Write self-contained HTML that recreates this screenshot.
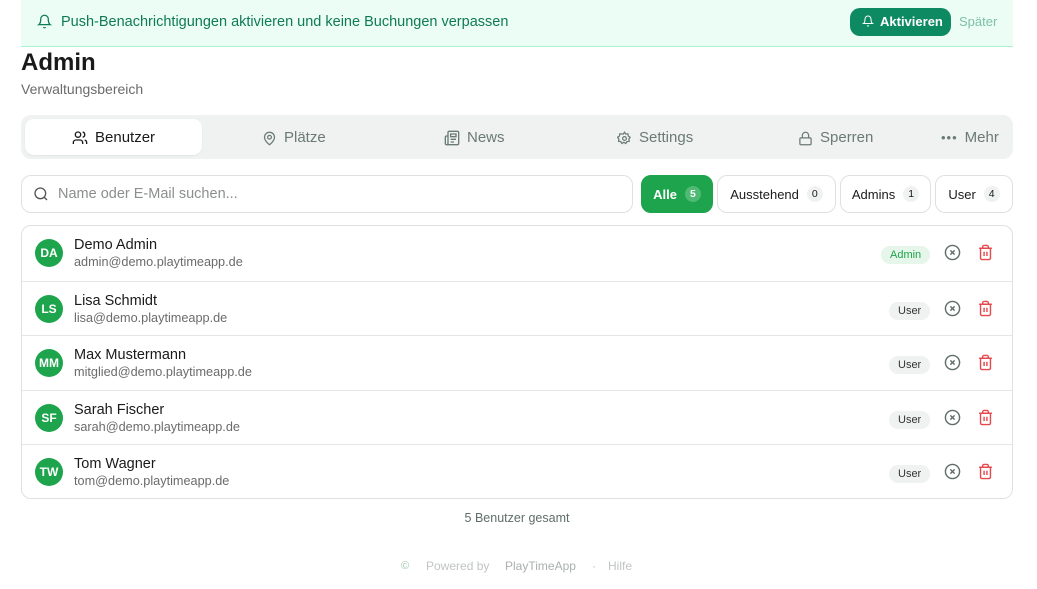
<!DOCTYPE html>
<html><head><meta charset="utf-8"><style>
*{box-sizing:border-box;margin:0;padding:0}
body{width:1037px;height:589px;background:#fff;font-family:"Liberation Sans",sans-serif;position:relative;overflow:hidden;color:#1a1a1a}
.abs{position:absolute}
.banner{left:21px;top:0;width:992px;height:47px;background:#ecfdf5;border-bottom:1px solid #a7f3d0}
.btxt{left:61px;top:14px;font-size:14.5px;color:#0f7a57}
.akt{left:850px;top:8px;width:101px;height:28px;background:#0e8a62;border-radius:10px;color:#fff;font-weight:bold;font-size:13px;line-height:28px;padding-left:30px}
.sp{left:959px;top:14px;font-size:13px;color:#7fbfa6}
h1{position:absolute;left:21px;top:49px;font-size:24px;font-weight:bold}
.sub{left:21px;top:81px;font-size:14px;color:#6b6b6b}
.tabs{left:21px;top:115px;width:992px;height:44px;background:#eff2f1;border-radius:10px}
.tab{position:absolute;top:0;height:44px;line-height:44px;font-size:15px;color:#6b7a75;display:flex;align-items:center;gap:7px}
.act{left:25px;top:119px;width:177px;height:36px;background:#fff;border-radius:9px;box-shadow:0 1px 2px rgba(0,0,0,.06)}
.search{left:21px;top:175px;width:612px;height:38px;border:1px solid #dde2e0;border-radius:10px}
.stxt{left:58px;top:186px;font-size:14.5px;color:#8a8f8d}
.fb{position:absolute;top:175px;height:38px;border:1px solid #dde2e0;border-radius:10px;font-size:13px;display:flex;align-items:center;justify-content:center;gap:8px;color:#1a1a1a}
.cnt{background:#eff2f1;border-radius:9px;font-size:10.5px;padding:2px 5px}
.list{left:21px;top:225px;width:992px;height:274px;border:1px solid #dde2e0;border-radius:10px}
.row{position:absolute;left:0;width:990px;height:55px;border-top:1px solid #e3e7e5}
.av{position:absolute;left:13px;top:13px;width:28px;height:28px;border-radius:50%;background:#1ea44d;color:#fff;font-weight:bold;font-size:12px;text-align:center;line-height:28px}
.nm{position:absolute;left:52px;top:11px;font-size:14.5px}
.em{position:absolute;left:52px;top:29px;font-size:12.7px;color:#6b6b6b}
.role{position:absolute;top:20px;height:18px;border-radius:9px;font-size:11px;line-height:18px;padding:0 9px}
.x{position:absolute;left:922px;top:18px}
.tr{position:absolute;left:955px;top:18px}
.foot{font-size:12px;color:#c0c4c2}
</style></head><body>
<div class="abs banner"></div>
<svg class="abs" style="left:37px;top:14px" width="15" height="15" viewBox="0 0 24 24" fill="none" stroke="#0f7a57" stroke-width="2"><path d="M6 8a6 6 0 0 1 12 0c0 7 3 9 3 9H3s3-2 3-9"/><path d="M10.3 21a1.9 1.9 0 0 0 3.4 0"/></svg>
<div class="abs btxt">Push-Benachrichtigungen aktivieren und keine Buchungen verpassen</div>
<div class="abs akt">Aktivieren</div>
<svg class="abs" style="left:862px;top:15px" width="12" height="12" viewBox="0 0 24 24" fill="none" stroke="#fff" stroke-width="2"><path d="M6 8a6 6 0 0 1 12 0c0 7 3 9 3 9H3s3-2 3-9"/><path d="M10.3 21a1.9 1.9 0 0 0 3.4 0"/></svg>
<div class="abs sp">Später</div>
<h1>Admin</h1>
<div class="abs sub">Verwaltungsbereich</div>
<div class="abs tabs"></div>
<div class="abs act"></div>
<div class="tab" style="left:72px;top:116px;color:#1a1a1a"><svg width="16" height="16" viewBox="0 0 24 24" fill="none" stroke="#1a1a1a" stroke-width="2"><path d="M16 21v-2a4 4 0 0 0-4-4H6a4 4 0 0 0-4 4v2"/><circle cx="9" cy="7" r="4"/><path d="M22 21v-2a4 4 0 0 0-3-3.9M16 3.1a4 4 0 0 1 0 7.8"/></svg>Benutzer</div>
<div class="tab" style="left:262px;top:116px"><svg width="15" height="15" viewBox="0 0 24 24" fill="none" stroke="#6b7a75" stroke-width="2"><path d="M20 10c0 6-8 12-8 12s-8-6-8-12a8 8 0 0 1 16 0z"/><circle cx="12" cy="10" r="3"/></svg>Plätze</div>
<div class="tab" style="left:444px;top:116px"><svg width="16" height="16" viewBox="0 0 24 24" fill="none" stroke="#6b7a75" stroke-width="2"><path d="M4 22h16a2 2 0 0 0 2-2V4a2 2 0 0 0-2-2H8a2 2 0 0 0-2 2v16a2 2 0 0 1-4 0v-9c0-1.1.9-2 2-2h2"/><path d="M18 14h-8M15 18h-5M10 6h8v4h-8z"/></svg>News</div>
<div class="tab" style="left:617px;top:116px"><svg width="15" height="15" viewBox="0 0 24 24" fill="none" stroke="#6b7a75" stroke-width="2"><circle cx="12" cy="12" r="3"/><path d="M12 2l2 3 3.5-.5.5 3.5 3 2-2 3 .5 3.5-3.5.5-2 3-3-2-3 2-2-3-3.5-.5.5-3.5-2-3 3-2 .5-3.5L10 5z"/></svg>Settings</div>
<div class="tab" style="left:798px;top:116px"><svg width="15" height="15" viewBox="0 0 24 24" fill="none" stroke="#6b7a75" stroke-width="2"><rect x="3" y="11" width="18" height="11" rx="2"/><path d="M7 11V7a5 5 0 0 1 10 0v4"/></svg>Sperren</div>
<div class="tab" style="left:941px;top:116px"><span style="font-size:13px;letter-spacing:1px">•••</span>Mehr</div>
<div class="abs search"></div>
<svg class="abs" style="left:33px;top:186px" width="16" height="16" viewBox="0 0 24 24" fill="none" stroke="#555" stroke-width="2"><circle cx="11" cy="11" r="8"/><path d="M21 21l-4.3-4.3"/></svg>
<div class="abs stxt">Name oder E-Mail suchen...</div>
<div class="fb" style="left:641px;width:72px;background:#1ea44d;border-color:#1ea44d;color:#fff;font-weight:bold">Alle <span class="cnt" style="background:#4fba73;color:#fff">5</span></div>
<div class="fb" style="left:717px;width:119px">Ausstehend <span class="cnt">0</span></div>
<div class="fb" style="left:840px;width:91px">Admins <span class="cnt">1</span></div>
<div class="fb" style="left:935px;width:78px">User <span class="cnt">4</span></div>
<div class="abs list">
<div class="row" style="top:0;border-top:none"><div class="av">DA</div><div class="nm">Demo Admin</div><div class="em">admin@demo.playtimeapp.de</div><div class="role" style="left:859px;background:#e6f6ea;color:#1ea44d">Admin</div><svg class="x" width="17" height="17" viewBox="0 0 24 24" fill="none" stroke="#5f6e69" stroke-width="2"><circle cx="12" cy="12" r="10"/><path d="M15 9l-6 6M9 9l6 6"/></svg><svg class="tr" width="17" height="17" viewBox="0 0 24 24" fill="none" stroke="#e5484d" stroke-width="2"><path d="M3 6h18M19 6v14a2 2 0 0 1-2 2H7a2 2 0 0 1-2-2V6M8 6V4a2 2 0 0 1 2-2h4a2 2 0 0 1 2 2v2M10 11v6M14 11v6"/></svg></div>
<div class="row" style="top:55px"><div class="av">LS</div><div class="nm">Lisa Schmidt</div><div class="em">lisa@demo.playtimeapp.de</div><div class="role" style="left:867px;background:#eff2f1;color:#333">User</div><svg class="x" width="17" height="17" viewBox="0 0 24 24" fill="none" stroke="#5f6e69" stroke-width="2"><circle cx="12" cy="12" r="10"/><path d="M15 9l-6 6M9 9l6 6"/></svg><svg class="tr" width="17" height="17" viewBox="0 0 24 24" fill="none" stroke="#e5484d" stroke-width="2"><path d="M3 6h18M19 6v14a2 2 0 0 1-2 2H7a2 2 0 0 1-2-2V6M8 6V4a2 2 0 0 1 2-2h4a2 2 0 0 1 2 2v2M10 11v6M14 11v6"/></svg></div>
<div class="row" style="top:109px"><div class="av">MM</div><div class="nm">Max Mustermann</div><div class="em">mitglied@demo.playtimeapp.de</div><div class="role" style="left:867px;background:#eff2f1;color:#333">User</div><svg class="x" width="17" height="17" viewBox="0 0 24 24" fill="none" stroke="#5f6e69" stroke-width="2"><circle cx="12" cy="12" r="10"/><path d="M15 9l-6 6M9 9l6 6"/></svg><svg class="tr" width="17" height="17" viewBox="0 0 24 24" fill="none" stroke="#e5484d" stroke-width="2"><path d="M3 6h18M19 6v14a2 2 0 0 1-2 2H7a2 2 0 0 1-2-2V6M8 6V4a2 2 0 0 1 2-2h4a2 2 0 0 1 2 2v2M10 11v6M14 11v6"/></svg></div>
<div class="row" style="top:164px"><div class="av">SF</div><div class="nm">Sarah Fischer</div><div class="em">sarah@demo.playtimeapp.de</div><div class="role" style="left:867px;background:#eff2f1;color:#333">User</div><svg class="x" width="17" height="17" viewBox="0 0 24 24" fill="none" stroke="#5f6e69" stroke-width="2"><circle cx="12" cy="12" r="10"/><path d="M15 9l-6 6M9 9l6 6"/></svg><svg class="tr" width="17" height="17" viewBox="0 0 24 24" fill="none" stroke="#e5484d" stroke-width="2"><path d="M3 6h18M19 6v14a2 2 0 0 1-2 2H7a2 2 0 0 1-2-2V6M8 6V4a2 2 0 0 1 2-2h4a2 2 0 0 1 2 2v2M10 11v6M14 11v6"/></svg></div>
<div class="row" style="top:218px"><div class="av">TW</div><div class="nm">Tom Wagner</div><div class="em">tom@demo.playtimeapp.de</div><div class="role" style="left:867px;background:#eff2f1;color:#333">User</div><svg class="x" width="17" height="17" viewBox="0 0 24 24" fill="none" stroke="#5f6e69" stroke-width="2"><circle cx="12" cy="12" r="10"/><path d="M15 9l-6 6M9 9l6 6"/></svg><svg class="tr" width="17" height="17" viewBox="0 0 24 24" fill="none" stroke="#e5484d" stroke-width="2"><path d="M3 6h18M19 6v14a2 2 0 0 1-2 2H7a2 2 0 0 1-2-2V6M8 6V4a2 2 0 0 1 2-2h4a2 2 0 0 1 2 2v2M10 11v6M14 11v6"/></svg></div>
</div>
<div class="abs" style="left:0;width:1034px;top:511px;text-align:center;font-size:12.5px;color:#5f6e69">5 Benutzer gesamt</div>
<div class="abs foot" style="left:401px;top:560px;font-size:11px;color:#9bc9b0">©</div>
<div class="abs foot" style="left:426px;top:559px">Powered by</div>
<div class="abs foot" style="left:505px;top:559px;color:#aab0ae">PlayTimeApp</div>
<div class="abs foot" style="left:592px;top:559px">·</div>
<div class="abs foot" style="left:608px;top:559px">Hilfe</div>
</body></html>
